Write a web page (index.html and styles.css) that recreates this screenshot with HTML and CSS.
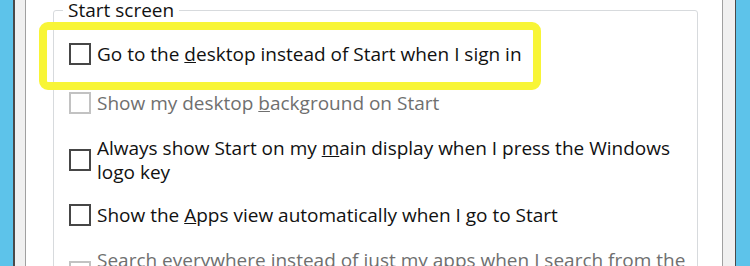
FILE: index.html
```html
<!DOCTYPE html>
<html>
    <head>
        <title>Taskbar and Navigation properties</title>
        <link rel="stylesheet" href="styles.css">
    </head>

    <body>
        <div class="window">
            <div class="panel">
                <fieldset class="group">
                    <legend>Start screen</legend>

                    <label class="option option-first">
                        <span class="box"></span>
                        <span class="text">Go to the <u>d</u>esktop instead of Start when I sign in</span>
                        <span class="highlight"></span>
                    </label>

                    <label class="option disabled">
                        <span class="box"></span>
                        <span class="text">Show my desktop <u>b</u>ackground on Start</span>
                    </label>

                    <label class="option option-tall">
                        <span class="box"></span>
                        <span class="text">Always show Start on my <u>m</u>ain display when I press the Windows logo key</span>
                    </label>

                    <label class="option">
                        <span class="box"></span>
                        <span class="text">Show the <u>A</u>pps view automatically when I go to Start</span>
                    </label>

                    <label class="option disabled">
                        <span class="box"></span>
                        <span class="text">Search everywhere instead of just my apps when I search from the Apps view</span>
                    </label>
                </fieldset>
            </div>
        </div>
    </body>
</html>
```

FILE: styles.css
```css
body {
    margin: 0;
    height: 266px;
    overflow: hidden;
    padding: 0 14px 0 13px;
    background-color: #5dc3ea;
    font-family: "Open Sans", "Noto Sans", sans-serif;
    font-size: 19px;
    line-height: 24px;
    color: #111;
}

.window {
    height: 320px;
    padding: 0 12px 0 10px;
    background-color: #f0f0f0;
    border-left: 2px solid #4a4a4a;
    border-right: 1px solid #4a4a4a;
}

.panel {
    height: 100%;
    padding: 0 24px 0 27px;
    background-color: white;
    border-left: 1px solid #a0a0a0;
    border-right: 1px solid #a0a0a0;
}

.group {
    margin: 0;
    min-height: 300px;
    padding: 22px 6px 0 15px;
    border: 1px solid #d7dadd;
    border-radius: 3px;
    display: flex;
    flex-direction: column;
    gap: 21px;
}

.group legend {
    margin-left: -6px;
    padding: 0 5px;
    line-height: 20px;
}

.option {
    position: relative;
    display: flex;
    align-items: center;
}

.option-first {
    margin-bottom: 4px;
}

.option-tall {
    margin-bottom: -2px;
}

.box {
    flex: none;
    width: 18px;
    height: 18px;
    margin-right: 6px;
    border: 2px solid #464646;
    background-color: white;
}

.disabled {
    color: #6f6f6f;
}
.disabled .box {
    border-color: #c2c2c2;
}

.highlight {
    position: absolute;
    left: -30px;
    top: -20px;
    width: 502px;
    height: 68px;
    box-sizing: border-box;
    border: 8px solid #f8f536;
    border-radius: 9px;
    pointer-events: none;
}
```
